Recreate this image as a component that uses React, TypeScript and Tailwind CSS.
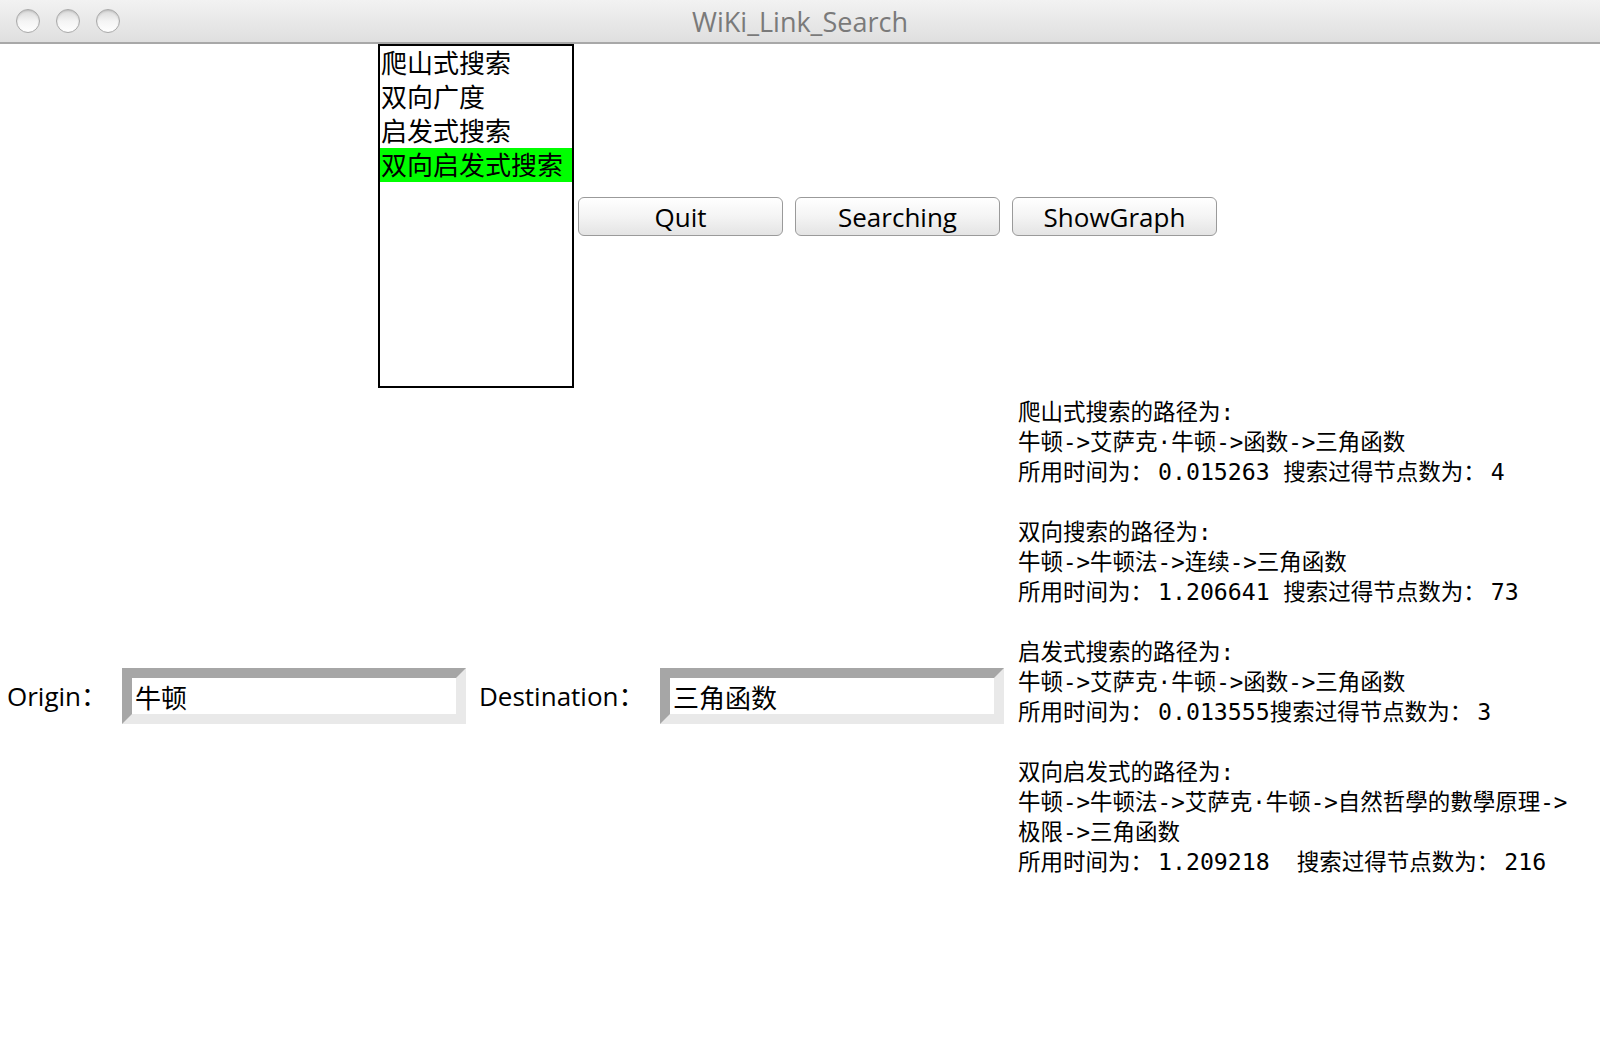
const methods = ['爬山式搜索', '双向广度', '启发式搜索', '双向启发式搜索']

const results = [
  ['爬山式搜索的路径为:', '牛顿->艾萨克·牛顿->函数->三角函数', '所用时间为：0.015263 搜索过得节点数为：4'],
  ['双向搜索的路径为:', '牛顿->牛顿法->连续->三角函数', '所用时间为：1.206641 搜索过得节点数为：73'],
  ['启发式搜索的路径为:', '牛顿->艾萨克·牛顿->函数->三角函数', '所用时间为：0.013555搜索过得节点数为：3'],
  [
    '双向启发式的路径为:',
    '牛顿->牛顿法->艾萨克·牛顿->自然哲學的數學原理->',
    '极限->三角函数',
    '所用时间为：1.209218  搜索过得节点数为：216',
  ],
]

const ui = { fontFamily: '"Open Sans", "Noto Sans CJK SC", sans-serif' }
const cjk = { fontFamily: '"Noto Sans CJK SC", sans-serif' }
const mono = { fontFamily: '"DejaVu Sans Mono", "Noto Sans CJK SC", monospace' }

function Light() {
  return (
    <div className="w-6 h-6 rounded-full border border-[#a9a9a9] bg-gradient-to-b from-[#d9d9d9] via-[#f4f4f4] to-white shadow-[inset_0_1px_2px_rgba(0,0,0,0.15)]" />
  )
}

function Button({ label }: { label: string }) {
  return (
    <button
      className="w-[205px] h-[39px] rounded-[6px] border border-[#9a9a9a] bg-gradient-to-b from-white via-[#f4f4f4] to-[#e4e4e4] text-[26px] text-black leading-none"
      style={ui}
    >
      {label}
    </button>
  )
}

function Field({ value }: { value: string }) {
  return (
    <div className="w-[344px] h-[56px] border-[10px] border-t-[#a6a6a6] border-l-[#a6a6a6] border-b-[#e9e9e9] border-r-[#e9e9e9] bg-white flex items-center pl-[3px] text-[26px] text-black" style={cjk}>
      {value}
    </div>
  )
}

// numbers in the result lines are a touch wider than the rest of the text
function ResultLine({ text }: { text: string }) {
  const parts = text.split(/([0-9][0-9.]*)/)
  return (
    <div className="h-[30px] leading-[30px] whitespace-pre">
      {parts.map((p, i) =>
        i % 2 === 1 ? (
          <span key={i} className="text-[23.2px] ml-[5px]">{p}</span>
        ) : (
          <span key={i}>{p}</span>
        )
      )}
    </div>
  )
}

export default function App() {
  return (
    <div className="w-[1600px] h-[1044px] bg-white overflow-hidden">
      {/* title bar */}
      <div className="h-[44px] grid grid-cols-[1fr_auto_1fr] items-center border-b-2 border-[#a8a8a8] bg-gradient-to-b from-[#f2f2f2] to-[#dfdfdf]">
        <div className="flex gap-4 pl-4">
          <Light />
          <Light />
          <Light />
        </div>
        <div className="text-[27px] text-[#7a7a7a] pt-[2px]" style={ui}>WiKi_Link_Search</div>
        <div />
      </div>

      {/* list + buttons */}
      <div className="flex">
        <div className="w-[378px] shrink-0" />
        <div className="w-[196px] h-[344px] border-2 border-black flex flex-col" style={cjk}>
          {methods.map((m, i) => (
            <div
              key={m}
              className={
                i === 3
                  ? 'h-[34px] flex items-center pb-[3px] pl-[1px] text-[26px] text-black bg-[#00ff00] whitespace-nowrap'
                  : 'h-[34px] flex items-center pb-[3px] pl-[1px] text-[26px] text-black whitespace-nowrap'
              }
            >
              {m}
            </div>
          ))}
        </div>
        <div className="ml-[4px] mt-[153px] flex gap-[12px] self-start">
          <Button label="Quit" />
          <Button label="Searching" />
          <Button label="ShowGraph" />
        </div>
      </div>

      {/* inputs + results */}
      <div className="flex">
        <div className="w-[1018px] shrink-0 pt-[280px] flex items-start">
          <div className="flex items-center">
            <div className="w-[122px] pl-[7px] text-[26px] text-black" style={ui}>Origin：</div>
            <Field value="牛顿" />
            <div className="ml-[13px] w-[181px] text-[26px] text-black" style={ui}>Destination：</div>
            <Field value="三角函数" />
          </div>
        </div>
        <div className="pt-[9px] flex flex-col gap-[30px] text-[22.5px] text-black" style={mono}>
          {results.map((block, i) => (
            <div key={i} className="flex flex-col">
              {block.map((line, j) => (
                <ResultLine key={j} text={line} />
              ))}
            </div>
          ))}
        </div>
      </div>
    </div>
  )
}
